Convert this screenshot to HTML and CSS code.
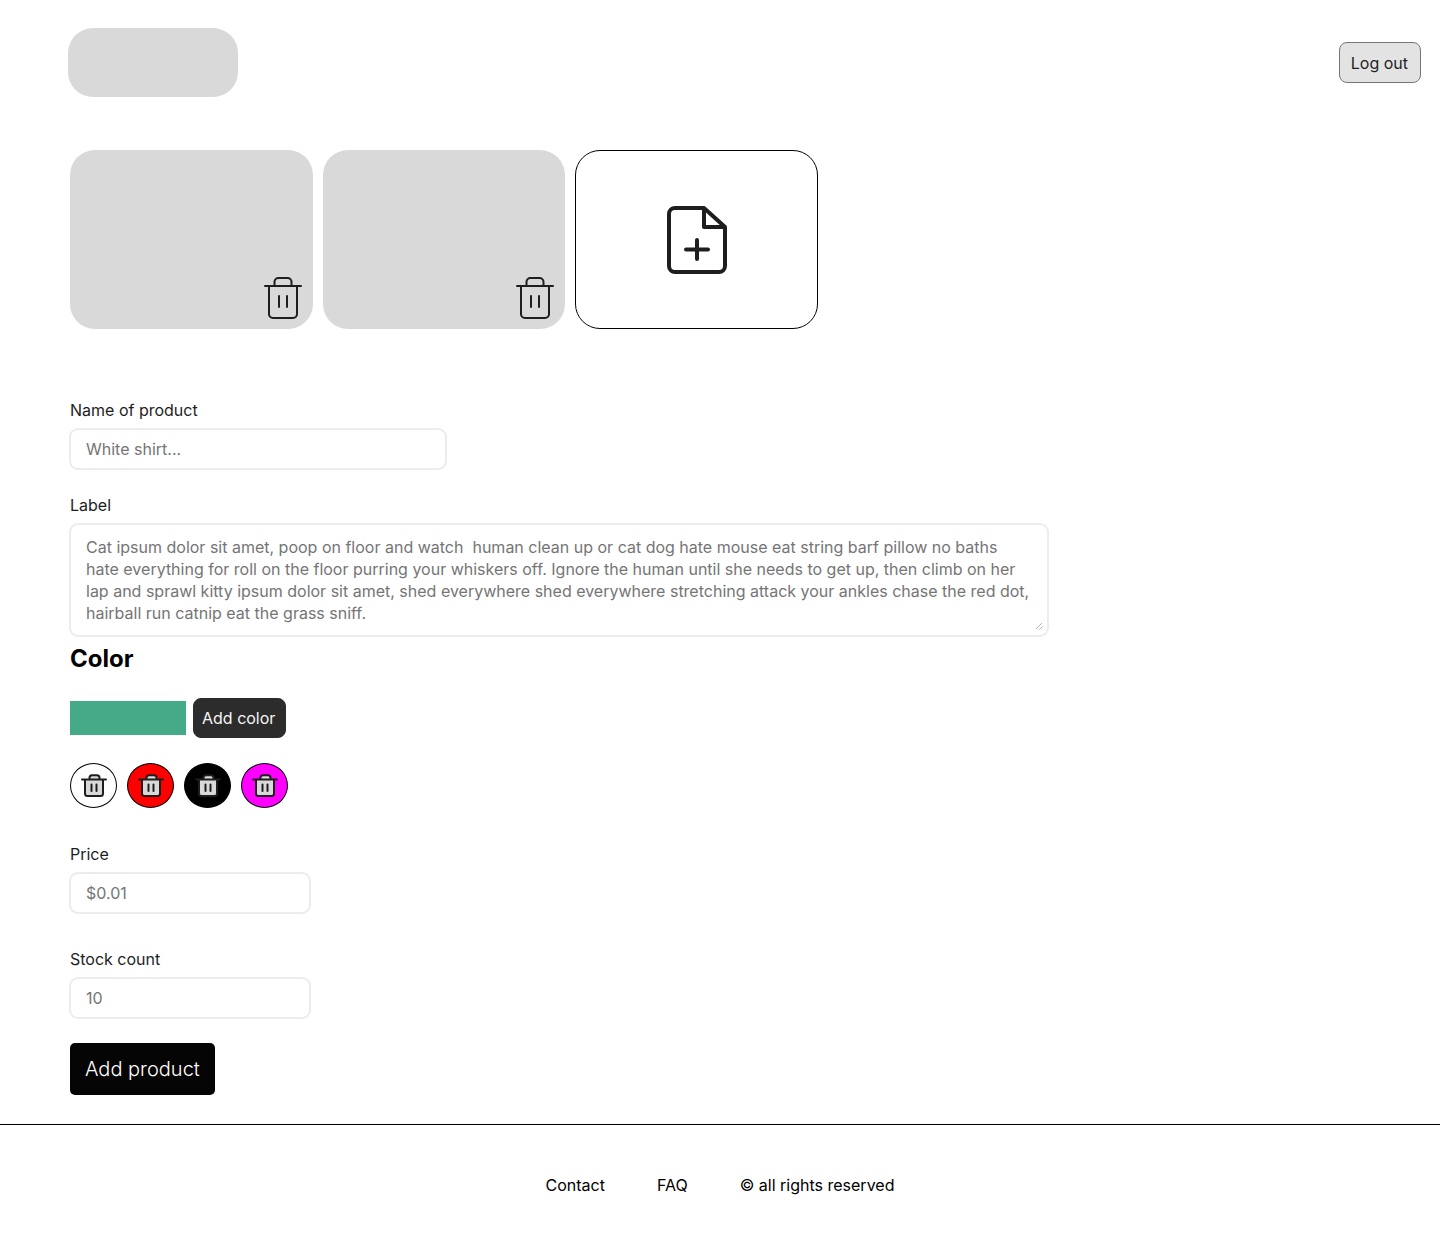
FILE: index.html
```html
<!DOCTYPE html>
<html lang="en">
<head>
<meta charset="utf-8">
<meta name="viewport" content="width=device-width, initial-scale=1">
<title>Add product</title>
<link rel="stylesheet" href="styles.css">
</head>
<body>
<svg class="sprite" aria-hidden="true">
  <symbol id="trash" viewBox="0 0 38 44">
    <path d="M5 10V38a4 4 0 0 0 4 4H29a4 4 0 0 0 4-4V10M1 10H37M10.500 10V6a4 4 0 0 1 4-4H23.500a4 4 0 0 1 4 4V10M15 20V31M23 20V31"/>
  </symbol>
  <symbol id="trash-small" viewBox="0 0 26 24">
    <path d="M4 5.500V19.500A2.500 2.500 0 0 0 6.500 22H19.500A2.500 2.500 0 0 0 22 19.500V5.500M1 5.500H25M8.500 5.500V3.700A2.500 2.500 0 0 1 11 1.200H16A2.500 2.500 0 0 1 18.500 3.700V5.500M10.500 10.500V17M15.500 10.500V17"/>
  </symbol>
</svg>
<header class="header">
  <div class="logo"></div>
  <button class="button button-light" type="button">Log out</button>
</header>
<main class="main">
  <form class="form">
    <div class="photos">
      <div class="photo">
        <button class="icon-button" type="button" aria-label="Delete photo"><svg class="trash"><use href="#trash"/></svg></button>
      </div>
      <div class="photo">
        <button class="icon-button" type="button" aria-label="Delete photo"><svg class="trash"><use href="#trash"/></svg></button>
      </div>
      <button class="photo-add" type="button" aria-label="Add photo">
        <svg class="file-plus" viewBox="0 0 60 68"><path d="M37 2H8a6 6 0 0 0-6 6V60a6 6 0 0 0 6 6H52a6 6 0 0 0 6-6V21ZM37 2V21H58M30 34V53M19 43.500H41"/></svg>
      </button>
    </div>
    <div class="field">
      <label for="name">Name of product</label>
      <input class="control control-medium" id="name" type="text" placeholder="White shirt...">
    </div>
    <div class="field">
      <label for="label">Label</label>
      <div class="area">
        <textarea class="control control-area" id="label" placeholder="Cat ipsum dolor sit amet, poop on floor and watch  human clean up or cat dog hate mouse eat string barf pillow no baths hate everything for roll on the floor purring your whiskers off. Ignore the human until she needs to get up, then climb on her lap and sprawl kitty ipsum dolor sit amet, shed everywhere shed everywhere stretching attack your ankles chase the red dot, hairball run catnip eat the grass sniff."></textarea>
        <svg class="grip" viewBox="0 0 8 8"><path d="M1 7L7 1M4.500 7.500L7.500 4.500"/></svg>
      </div>
    </div>
    <section class="colors">
      <h2>Color</h2>
      <div class="picker">
        <input class="swatch" type="color" value="#44aa88" aria-label="Color">
        <button class="button button-dark" type="button">Add color</button>
      </div>
      <div class="chips">
        <button class="chip white" type="button" aria-label="Delete white"><svg class="trash-small"><use href="#trash-small"/></svg></button>
        <button class="chip red" type="button" aria-label="Delete red"><svg class="trash-small"><use href="#trash-small"/></svg></button>
        <button class="chip black" type="button" aria-label="Delete black"><svg class="trash-small"><use href="#trash-small"/></svg></button>
        <button class="chip magenta" type="button" aria-label="Delete magenta"><svg class="trash-small"><use href="#trash-small"/></svg></button>
      </div>
    </section>
    <div class="field field-spaced">
      <label for="price">Price</label>
      <input class="control control-small" id="price" type="text" placeholder="$0.01">
    </div>
    <div class="field field-spaced">
      <label for="stock">Stock count</label>
      <input class="control control-small" id="stock" type="text" placeholder="10">
    </div>
    <button class="submit" type="submit">Add product</button>
  </form>
</main>
<footer class="footer">
  <a href="#contact">Contact</a>
  <a href="#faq">FAQ</a>
  <span>© all rights reserved</span>
</footer>
</body>
</html>
```
FILE: styles.css
```css
* { box-sizing: border-box; }
body {
  margin: 0;
  background: #fff;
  color: #1e1e1e;
  font: 16px/22px Inter, "Liberation Sans", sans-serif;
}
button, input, textarea { font: inherit; margin: 0; }
button { cursor: pointer; }
svg { display: block; }
.sprite { display: none; }

.header {
  display: flex;
  align-items: center;
  justify-content: space-between;
  padding: 28px 19px 0 68px;
}
.logo { width: 170px; height: 69px; border-radius: 25px; background: #d9d9d9; }

.button { height: 40px; border-radius: 8px; padding: 0 11px; }
.button-light { height: 41px; padding-right: 12px; border: 1px solid #767676; background: #e3e3e3; color: #1e1e1e; }
.button-dark { border: 1px solid #2c2c2c; background: #2c2c2c; color: #f5f5f5; padding: 0 10px 0 8px; }

.main { padding: 53px 70px 29px; }
.photos {
  display: grid;
  grid-template-columns: repeat(3, 1fr);
  gap: 10px;
  max-width: 748px;
  margin-bottom: 70px;
}
.photo, .photo-add { height: 179px; border-radius: 25px; }
.photo {
  display: flex;
  align-items: flex-end;
  justify-content: flex-end;
  padding: 9px 11px;
  background: #d9d9d9;
}
.photo-add {
  display: grid;
  place-items: center;
  padding: 0;
  border: 1px solid #000;
  background: #fff;
}
.icon-button { padding: 0; border: 0; background: none; }
.trash, .trash-small, .file-plus {
  fill: none;
  stroke: #1e1e1e;
  stroke-width: 2;
  stroke-linecap: round;
  stroke-linejoin: round;
}
.trash { width: 38px; height: 44px; }
.trash-small { width: 26px; height: 24px; fill: #d9d9d9; }
.file-plus { width: 60px; height: 68px; stroke-width: 4; }

.field { display: flex; flex-direction: column; gap: 8px; margin-bottom: 25px; }
.field-spaced { margin-bottom: 35px; }
.control {
  display: block;
  width: 100%;
  height: 40px;
  padding: 0 15px;
  border: 1px solid #ececec;
  border-radius: 8px;
  outline: 0;
  box-shadow: 0 0 0 1px #ececec;
  background: #fff;
  color: #1e1e1e;
}
.control::placeholder { color: #757575; opacity: 1; }
.control-small { max-width: 240px; }
.control-medium { max-width: 376px; }
.control-area { height: 112px; padding: 11px 15px; resize: none; overflow: hidden; }
.area { position: relative; max-width: 978px; }
.grip {
  position: absolute;
  right: 5px;
  bottom: 6px;
  width: 8px;
  height: 8px;
  fill: none;
  stroke: #b3b3b3;
}

.colors { margin: -17px 0 35px; }
h2 { margin: 0 0 25px; color: #000; font-size: 24px; line-height: 29px; font-weight: 700; }
.picker { display: flex; align-items: center; gap: 7px; margin-bottom: 25px; }
.swatch {
  appearance: none;
  width: 116px;
  height: 34px;
  padding: 0;
  border: 0;
  background: #44aa88;
}
.swatch::-webkit-color-swatch-wrapper { padding: 0; }
.swatch::-webkit-color-swatch { border: 0; border-radius: 0; }
.chips { display: flex; gap: 10px; }
.chip {
  display: grid;
  place-items: center;
  width: 47px;
  height: 45px;
  padding: 0;
  border: 1px solid #000;
  border-radius: 50%;
}
.white { background: #fff; }
.red { background: #f00; }
.black { background: #000; }
.magenta { background: #f0f; }

.submit {
  display: block;
  height: 52px;
  margin-top: -10px;
  padding: 0 15px;
  border: 0;
  border-radius: 5px;
  background: #050505;
  color: #fff;
  font-size: 20px;
  font-weight: 300;
}

.footer {
  display: flex;
  justify-content: center;
  gap: 52px;
  padding: 49px 0;
  border-top: 1px solid #000;
  color: #000;
}
.footer a { color: inherit; text-decoration: none; }
```
